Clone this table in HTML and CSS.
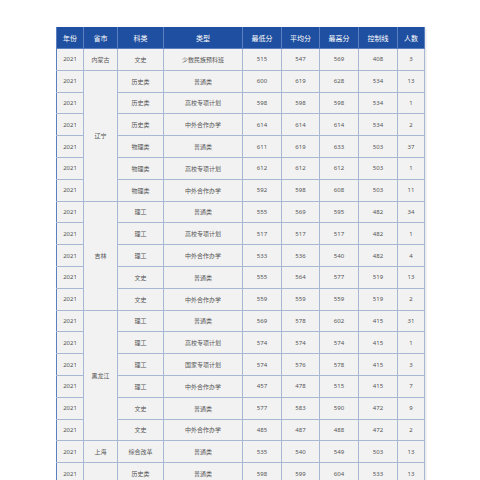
FILE: index.html
```html
<!DOCTYPE html>
<html lang="zh">
<head>
<meta charset="utf-8">
<link rel="stylesheet" href="styles.css">
</head>
<body>
<div class="wrap">
<table class="score">
<colgroup>
<col class="c1"><col class="c2"><col class="c3"><col class="c4"><col class="c5"><col class="c6"><col class="c7"><col class="c8"><col class="c9">
</colgroup>
<thead>
<tr><th>年份</th><th>省市</th><th>科类</th><th>类型</th><th>最低分</th><th>平均分</th><th>最高分</th><th>控制线</th><th>人数</th></tr>
</thead>
<tbody>
<tr><td>2021</td><td>内蒙古</td><td>文史</td><td>少数民族预科班</td><td>515</td><td>547</td><td>569</td><td>408</td><td>3</td></tr>
<tr><td>2021</td><td rowspan="6">辽宁</td><td>历史类</td><td>普通类</td><td>600</td><td>619</td><td>628</td><td>534</td><td>13</td></tr>
<tr><td>2021</td><td>历史类</td><td>高校专项计划</td><td>598</td><td>598</td><td>598</td><td>534</td><td>1</td></tr>
<tr><td>2021</td><td>历史类</td><td>中外合作办学</td><td>614</td><td>614</td><td>614</td><td>534</td><td>2</td></tr>
<tr><td>2021</td><td>物理类</td><td>普通类</td><td>611</td><td>619</td><td>633</td><td>503</td><td>37</td></tr>
<tr><td>2021</td><td>物理类</td><td>高校专项计划</td><td>612</td><td>612</td><td>612</td><td>503</td><td>1</td></tr>
<tr><td>2021</td><td>物理类</td><td>中外合作办学</td><td>592</td><td>598</td><td>608</td><td>503</td><td>11</td></tr>
<tr><td>2021</td><td rowspan="5">吉林</td><td>理工</td><td>普通类</td><td>555</td><td>569</td><td>595</td><td>482</td><td>34</td></tr>
<tr><td>2021</td><td>理工</td><td>高校专项计划</td><td>517</td><td>517</td><td>517</td><td>482</td><td>1</td></tr>
<tr><td>2021</td><td>理工</td><td>中外合作办学</td><td>533</td><td>536</td><td>540</td><td>482</td><td>4</td></tr>
<tr><td>2021</td><td>文史</td><td>普通类</td><td>555</td><td>564</td><td>577</td><td>519</td><td>13</td></tr>
<tr><td>2021</td><td>文史</td><td>中外合作办学</td><td>559</td><td>559</td><td>559</td><td>519</td><td>2</td></tr>
<tr><td>2021</td><td rowspan="6">黑龙江</td><td>理工</td><td>普通类</td><td>569</td><td>578</td><td>602</td><td>415</td><td>31</td></tr>
<tr><td>2021</td><td>理工</td><td>高校专项计划</td><td>574</td><td>574</td><td>574</td><td>415</td><td>1</td></tr>
<tr><td>2021</td><td>理工</td><td>国家专项计划</td><td>574</td><td>576</td><td>578</td><td>415</td><td>3</td></tr>
<tr><td>2021</td><td>理工</td><td>中外合作办学</td><td>457</td><td>478</td><td>515</td><td>415</td><td>7</td></tr>
<tr><td>2021</td><td>文史</td><td>普通类</td><td>577</td><td>583</td><td>590</td><td>472</td><td>9</td></tr>
<tr><td>2021</td><td>文史</td><td>中外合作办学</td><td>485</td><td>487</td><td>488</td><td>472</td><td>2</td></tr>
<tr><td>2021</td><td>上海</td><td>综合改革</td><td>普通类</td><td>535</td><td>540</td><td>549</td><td>503</td><td>13</td></tr>
<tr><td>2021</td><td></td><td>历史类</td><td>普通类</td><td>598</td><td>599</td><td>604</td><td>533</td><td>13</td></tr>
</tbody>
</table>
</div>
</body>
</html>
```
FILE: styles.css
```css
html, body {
  margin: 0;
  padding: 0;
  background: #ffffff;
}
.wrap {
  padding-top: 27px;
  padding-left: 56px;
}
.score {
  border-collapse: collapse;
  table-layout: fixed;
  width: 368px;
  font-family: "Noto Sans", "Noto Sans CJK SC", sans-serif;
  box-shadow: 1px 1px 2px rgba(0,0,0,0.12);
}
.c1 { width: 27px; }
.c2 { width: 34px; }
.c3 { width: 46px; }
.c4 { width: 79px; }
.c5 { width: 39px; }
.c6 { width: 38px; }
.c7 { width: 39px; }
.c8 { width: 39px; }
.c9 { width: 27px; }
.score th {
  background: #1f4fa0;
  color: #ffffff;
  font-weight: normal;
  font-size: 7px;
  height: 21px;
  padding: 0;
  text-align: center;
  border: 1px solid #5c7fc0;
  border-top: none;
}
.score td {
  background: #f2f2f2;
  color: #555555;
  font-size: 6px;
  height: 20.8px;
  padding: 0;
  text-align: center;
  vertical-align: middle;
  border: 1px solid #a8b7d3;
}
.score tr td:first-child {
  border-left: 1px solid #5c7fc0;
}
```
